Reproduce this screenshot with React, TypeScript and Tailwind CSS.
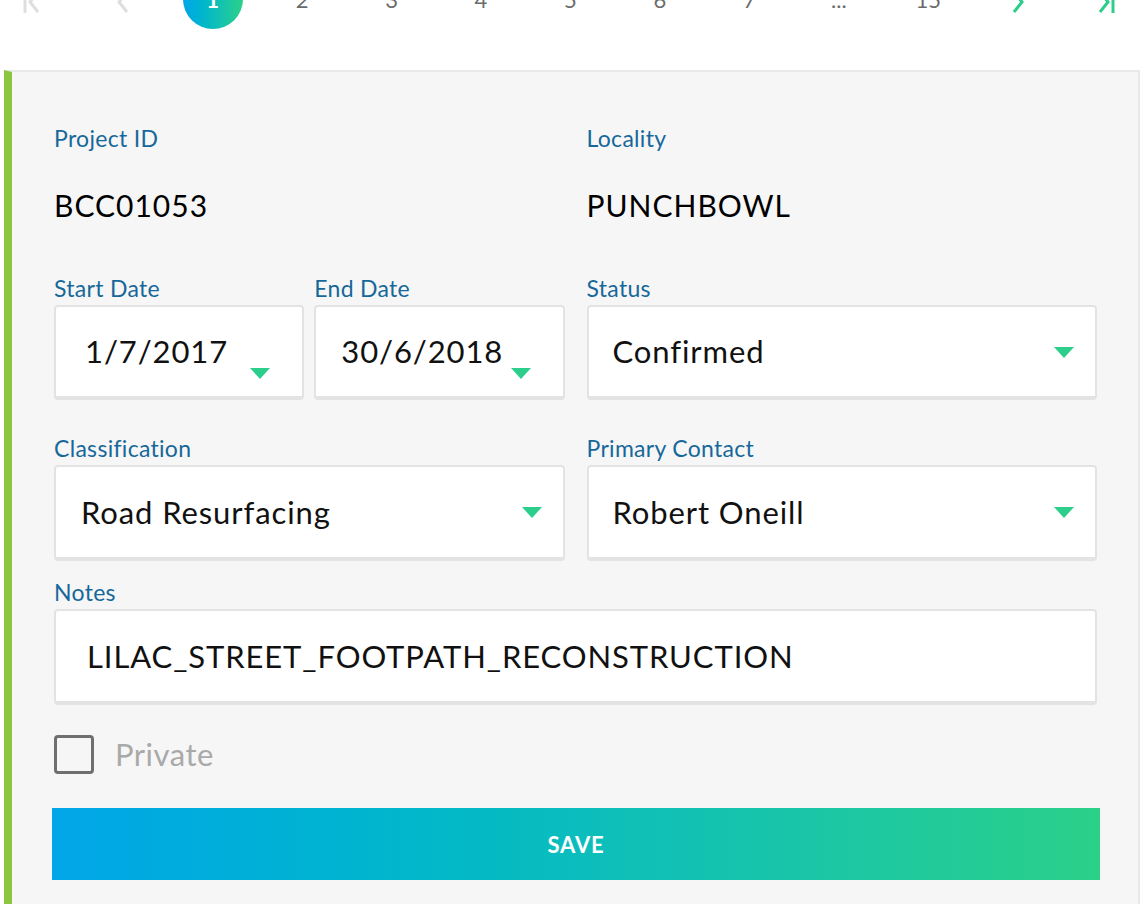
import type { ReactNode } from 'react'

const FONT = { fontFamily: 'Lato, "Open Sans", "Noto Sans", sans-serif' }

function Caret({ low = false }: { low?: boolean }) {
  return (
    <svg
      width="20"
      height="11"
      viewBox="0 0 20 11"
      className={low ? 'absolute right-[32px] top-[61px]' : 'absolute right-[21px] top-[40px]'}
    >
      <path d="M0 0 L20 0 L10 11 Z" fill="#2bcf8b" />
    </svg>
  )
}

function Label({ children }: { children: ReactNode }) {
  return (
    <div className="h-[28px] text-[23px] leading-[28px] tracking-[0.3px] text-[#17689a]">{children}</div>
  )
}

function Box({
  children,
  pad = 'pl-[27px]',
  caret,
  h = 'h-[95px]',
}: {
  children: ReactNode
  pad?: string
  caret?: 'low' | 'mid'
  h?: string
}) {
  return (
    <div
      className={`relative mt-[3px] flex ${h} items-center rounded-[4px] border-2 border-b-4 border-[#e3e3e3] bg-white ${pad} text-[31px] text-[#111]`}
    >
      <span className="tracking-[0.9px]">{children}</span>
      {caret && <Caret low={caret === 'low'} />}
    </div>
  )
}

function Chevron({ kind, color }: { kind: 'first' | 'prev' | 'next' | 'last'; color: string }) {
  const left = kind === 'first' || kind === 'prev'
  const bar = kind === 'first' || kind === 'last'
  return (
    <svg
      width="22"
      height="24"
      viewBox="0 0 22 24"
      fill="none"
      stroke={color}
      strokeWidth="3"
      className="translate-y-[3px]"
    >
      {left ? <path d="M15 2 L7 12 L15 22" /> : <path d="M7 2 L15 12 L7 22" />}
      {bar && (left ? <path d="M2 1 V23" /> : <path d="M20 1 V23" />)}
    </svg>
  )
}

export default function App() {
  const pages = ['2', '3', '4', '5', '6', '7', '...', '15']
  return (
    <div className="min-h-screen overflow-hidden bg-white" style={FONT}>
      {/* pagination, scrolled partly out of view */}
      <div className="ml-[-11px] mt-[-31px] flex h-[60px] items-center">
        <div className="flex w-[90px] justify-center">
          <Chevron kind="first" color="#dedede" />
        </div>
        <div className="flex w-[90px] justify-center">
          <Chevron kind="prev" color="#dedede" />
        </div>
        <div className="flex w-[90px] justify-center">
          <div className="flex h-[60px] w-[60px] items-center justify-center rounded-full bg-gradient-to-r from-[#02a6e8] to-[#2bd088] text-[22px] font-bold text-white">
            1
          </div>
        </div>
        {pages.map((p) => (
          <div key={p} className="flex w-[90px] justify-center text-[22px] text-[#6b6b6b]">
            {p}
          </div>
        ))}
        <div className="flex w-[90px] justify-center">
          <Chevron kind="next" color="#2bcf8b" />
        </div>
        <div className="flex w-[84px] justify-center">
          <Chevron kind="last" color="#2bcf8b" />
        </div>
      </div>

      {/* card */}
      <div className="ml-[4px] mr-[6px] mt-[41px] min-h-[900px] border-l-8 border-r-2 border-t-2 border-[#e9e9e9] border-l-[#8cc63f] bg-[#f6f6f6] pl-[42px] pr-[41px] pt-[52px]">
        <div className="grid grid-cols-2 gap-x-[22px]">
          <div>
            <Label>Project ID</Label>
            <div className="mt-[35px] h-[36px] text-[30px] leading-[36px] tracking-[1px] text-black">BCC01053</div>
          </div>
          <div>
            <Label>Locality</Label>
            <div className="mt-[35px] h-[36px] text-[30px] leading-[36px] tracking-[1px] text-black">PUNCHBOWL</div>
          </div>
        </div>

        <div className="mt-[51px] grid grid-cols-2 gap-x-[22px]">
          <div className="grid grid-cols-2 gap-x-[10px]">
            <div>
              <Label>Start Date</Label>
              <Box pad="pl-[29px]" caret="low">1/7/2017</Box>
            </div>
            <div>
              <Label>End Date</Label>
              <Box pad="pl-[25px]" caret="low">30/6/2018</Box>
            </div>
          </div>
          <div>
            <Label>Status</Label>
            <Box pad="pl-[24px]" caret="mid">Confirmed</Box>
          </div>
        </div>

        <div className="mt-[34px] grid grid-cols-2 gap-x-[22px]">
          <div>
            <Label>Classification</Label>
            <Box pad="pl-[25px]" caret="mid" h="h-[96px]">Road Resurfacing</Box>
          </div>
          <div>
            <Label>Primary Contact</Label>
            <Box pad="pl-[24px]" caret="mid" h="h-[96px]">Robert Oneill</Box>
          </div>
        </div>

        <div className="mt-[17px]">
          <Label>Notes</Label>
          <Box pad="pl-[31px]" h="h-[96px]">LILAC_STREET_FOOTPATH_RECONSTRUCTION</Box>
        </div>

        <label className="mt-[30px] flex h-[39px] items-center gap-[21px]">
          <span className="h-[39px] w-[40px] rounded-[4px] border-[3px] border-[#6f6f6f]" />
          <span className="text-[31px] leading-[39px] tracking-[0.5px] text-[#a9a9a9]">Private</span>
        </label>

        <button
          type="button"
          className="ml-[-2px] mt-[34px] flex h-[72px] w-[1048px] items-center justify-center bg-gradient-to-r from-[#02a6e8] to-[#2bd088] text-[22px] font-bold tracking-[0.8px] text-white"
        >
          SAVE
        </button>
      </div>
    </div>
  )
}
